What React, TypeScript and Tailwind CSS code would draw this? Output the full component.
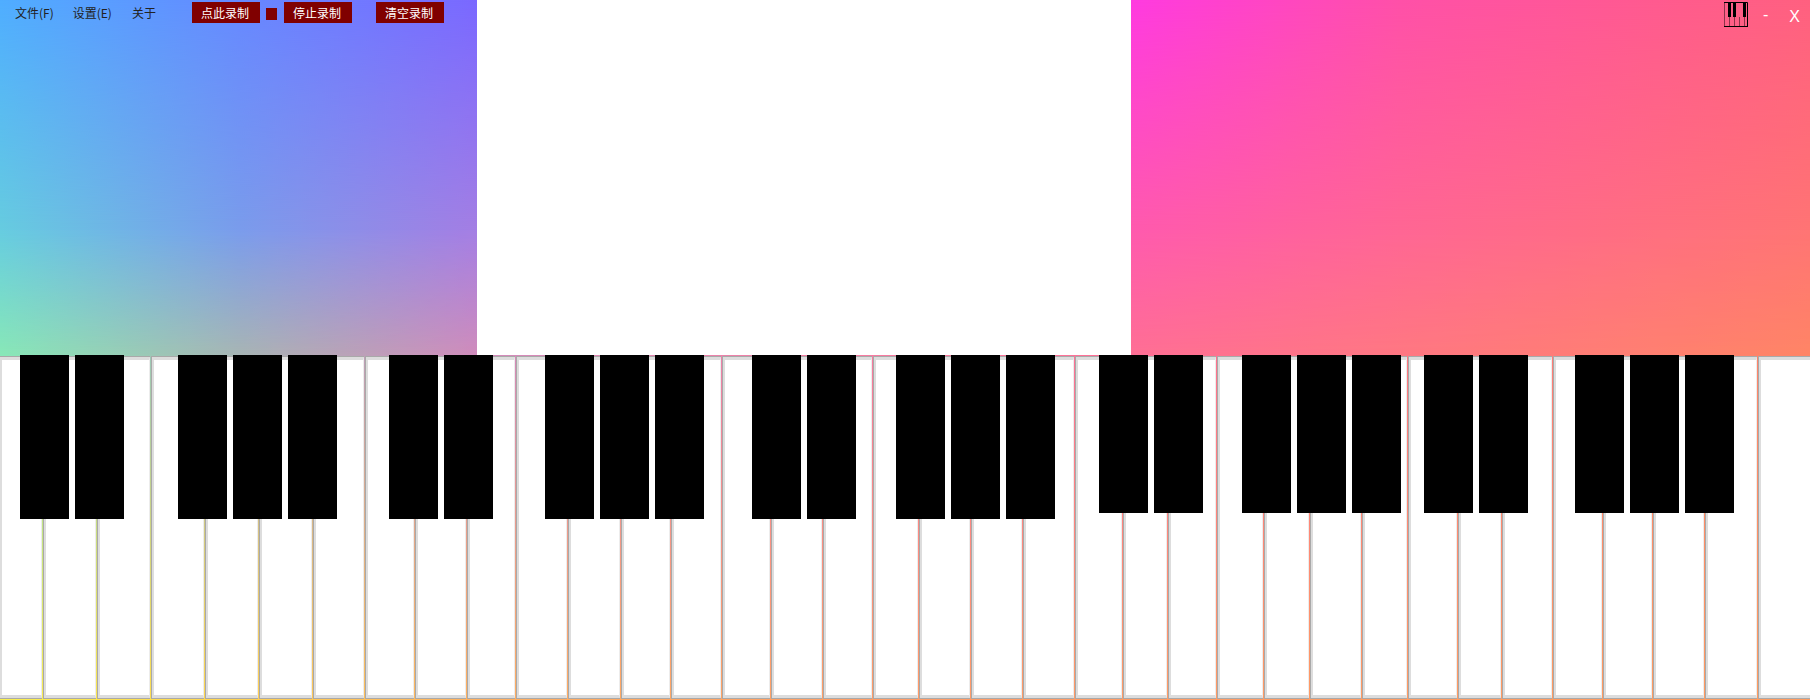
import React from "react";

const lines = [42, 96, 150, 204, 258, 312, 364, 414, 466, 515, 567, 620, 670, 721, 770, 822, 872, 918, 970, 1022, 1074, 1122, 1167, 1216, 1263, 1309, 1361, 1407, 1457, 1501, 1552, 1602, 1652, 1704, 1757, 1811];
const blackTall = [20, 75, 178, 233, 288, 389, 444, 545, 600, 655, 752, 807, 896, 951, 1006];
const blackShort = [1099, 1154, 1242, 1297, 1352, 1424, 1479, 1575, 1630, 1685];

function WhiteKey({ width }: { width: number }) {
  return (
    <div className="shrink-0 h-full border-l border-y border-[#a9a9a9]" style={{ width }}>
      <div className="h-full bg-white border-l-2 border-y-[3px] border-r border-[#dddddd] border-r-[#ececec]" />
    </div>
  );
}

function BlackKey({ left, short }: { left: number; short?: boolean }) {
  return (
    <div
      className={"absolute top-0 w-[49px] bg-black " + (short ? "h-[158px]" : "h-[164px]")}
      style={{ left }}
    />
  );
}

function RecButton({ children }: { children: React.ReactNode }) {
  return (
    <button className="w-[68px] h-[21px] pr-0.5 bg-[#800000] text-white text-[12px] leading-[21px] text-center">
      {children}
    </button>
  );
}

function PianoIcon() {
  return (
    <svg width="24" height="26" viewBox="0 0 24 26" className="block">
      <path d="M5.5 15V24M10.5 15V24M15.5 15V24M20.5 15V24M0.5 0.5V24" fill="none" stroke="#000" strokeOpacity="0.45" strokeWidth="1" />
      <path d="M0 0.5H23.5V24" fill="none" stroke="#000" strokeWidth="1" />
      <path d="M0 24.5H24" stroke="#000" strokeWidth="1" />
      <rect x="4" y="1" width="3" height="14" fill="#000" />
      <rect x="9" y="1" width="3" height="14" fill="#000" />
      <rect x="19" y="1" width="3" height="14" fill="#000" />
    </svg>
  );
}

export default function App() {
  let prev = -1;
  const widths = lines.map((l) => {
    const w = l - prev;
    prev = l + 1;
    return w;
  });

  return (
    <div className="relative w-[1810px] h-[700px] overflow-hidden font-['Noto_Sans_CJK_SC','Noto_Sans',sans-serif]">
      {/* mesh background */}
      <div className="absolute inset-0 bg-[linear-gradient(to_right,#f8f050_0px,#ffd850_200px,#ffb060_477px,#ff9c68_900px,#ff9c60_1810px)]" />
      <div className="absolute inset-0 bg-[linear-gradient(to_right,#88e8b8_0px,#a8b5b5_240px,#d08cbc_477px,#f47ea4_800px,#ff6f95_1131px,#ff8566_1810px)] [mask-image:linear-gradient(to_bottom,black_0px,black_355px,transparent_700px)]" />
      <div className="absolute inset-0 bg-[linear-gradient(to_right,#66cce0_0px,#7a9cec_240px,#a47ee4_477px,#ff5aae_1131px,#ff6694_1400px,#ff7474_1810px)] [mask-image:linear-gradient(to_bottom,black_0px,black_230px,transparent_355px)]" />
      <div className="absolute inset-0 bg-[linear-gradient(to_right,#4fadff_0px,#6688ff_240px,#7a68ff_477px,#ff3ae0_1131px,#ff50a8_1400px,#ff6080_1810px)] [mask-image:linear-gradient(to_bottom,black_0px,transparent_230px)]" />

      <div className="relative flex flex-col h-full">
        <div className="flex h-[355px] shrink-0">
          {/* left: toolbar */}
          <div className="w-[477px] shrink-0 flex items-start pt-0.5 pl-[15px]">
            <div className="flex items-center h-[21px] text-[12px] text-[#222222] gap-[19px]">
              <span>文件(F)</span>
              <span>设置(E)</span>
              <span className="ml-px">关于</span>
            </div>
            <div className="ml-9 flex items-center h-[21px]">
              <RecButton>点此录制</RecButton>
              <span className="block w-[11px] h-3 ml-[6px] mr-[7px] mt-[3px] bg-[#800000]" />
              <RecButton>停止录制</RecButton>
              <span className="w-6" />
              <RecButton>清空录制</RecButton>
            </div>
          </div>
          {/* center */}
          <div className="flex-1 bg-white" />
          {/* right: window controls */}
          <div className="w-[679px] shrink-0 flex items-start justify-end">
            <div className="mt-0.5 mr-[15px]">
              <PianoIcon />
            </div>
            <span className="mt-[5px] text-white text-[16px] leading-5 font-['Liberation_Sans',sans-serif]">-</span>
            <span className="mt-[7px] ml-[21px] mr-[10px] text-white text-[16px] leading-5 font-['Liberation_Sans',sans-serif]">X</span>
          </div>
        </div>

        {/* keyboard */}
        <div className="relative h-[345px] overflow-hidden">
          <div className="flex h-full -ml-px py-px gap-px">
            {widths.map((w, i) => (
              <WhiteKey key={i} width={w} />
            ))}
          </div>
          {blackTall.map((x) => (
            <BlackKey key={x} left={x} />
          ))}
          {blackShort.map((x) => (
            <BlackKey key={x} left={x} short />
          ))}
        </div>
      </div>
    </div>
  );
}
